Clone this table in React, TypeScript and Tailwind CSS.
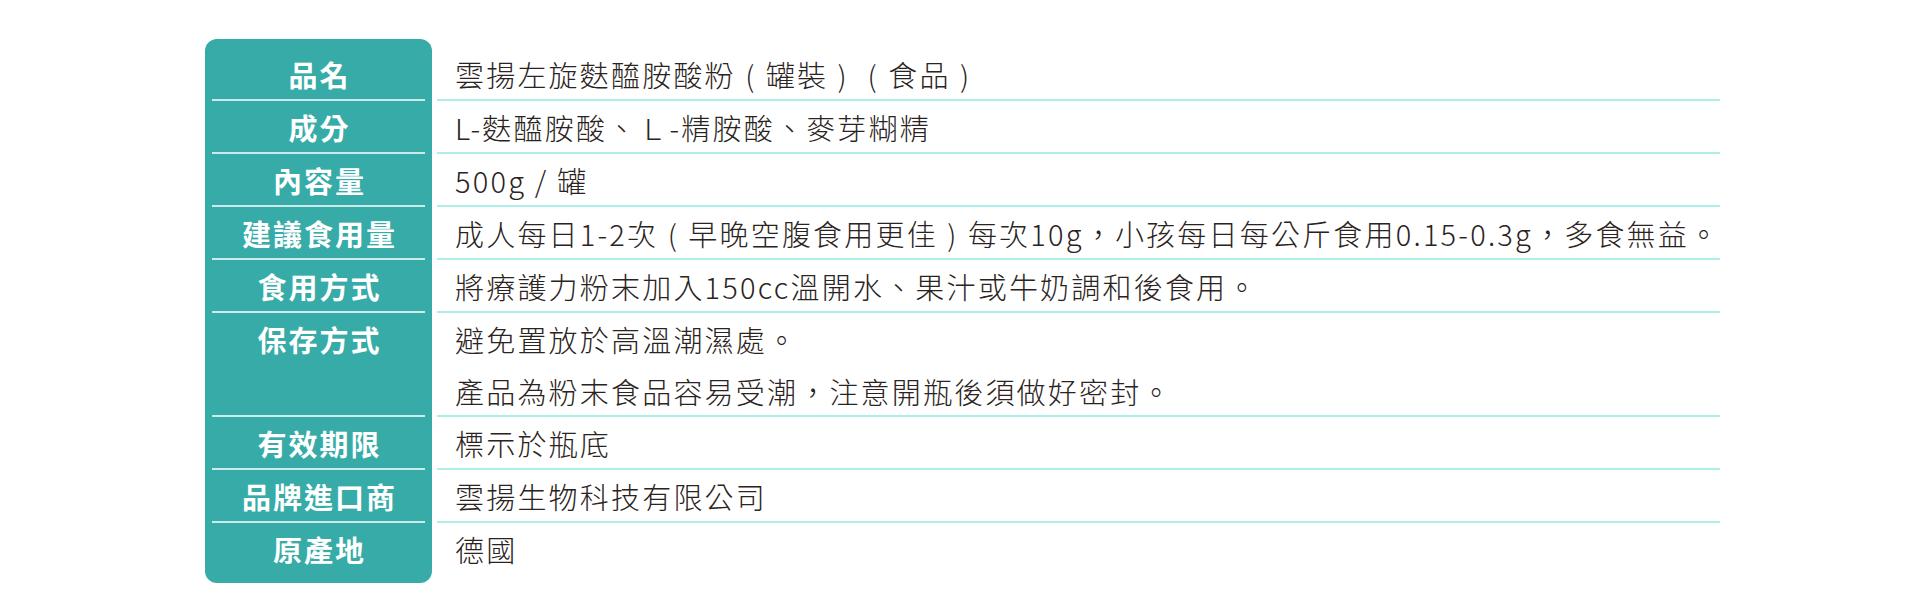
import { Fragment } from "react";

const rows: { label: string; lines: string[] }[] = [
  { label: "品名", lines: ["雲揚左旋麩醯胺酸粉（罐裝）（食品）"] },
  { label: "成分", lines: ["L-麩醯胺酸、Ｌ-精胺酸、麥芽糊精"] },
  { label: "內容量", lines: ["500g / 罐"] },
  {
    label: "建議食用量",
    lines: ["成人每日1-2次（早晚空腹食用更佳）每次10g，小孩每日每公斤食用0.15-0.3g，多食無益。"],
  },
  { label: "食用方式", lines: ["將療護力粉末加入150cc溫開水、果汁或牛奶調和後食用。"] },
  {
    label: "保存方式",
    lines: ["避免置放於高溫潮濕處。", "產品為粉末食品容易受潮，注意開瓶後須做好密封。"],
  },
  { label: "有效期限", lines: ["標示於瓶底"] },
  { label: "品牌進口商", lines: ["雲揚生物科技有限公司"] },
  { label: "原產地", lines: ["德國"] },
];

const font = { fontFamily: '"Noto Sans CJK TC", "Noto Sans", sans-serif' };

// full-width brackets sit centred in their cell in the original
function Line({ text }: { text: string }) {
  const parts = text.split(/([（）])/);
  return (
    <>
      {parts.map((p, i) =>
        p === "（" || p === "）" ? (
          <span key={i} className="inline-block w-[30px] text-center">
            {p === "（" ? "(" : ")"}
          </span>
        ) : (
          <Fragment key={i}>{p}</Fragment>
        )
      )}
    </>
  );
}

export default function App() {
  return (
    <div className="w-[1920px] h-[613px] bg-white overflow-hidden" style={font}>
      <div className="flex pt-[39px] pl-[205px] gap-[5px]">
        {/* Label column */}
        <div className="w-[227px] bg-[#36aba8] rounded-[12px] px-[7px] pt-[9px] pb-[7px]">
          {rows.map((row, i) => (
            <div
              key={row.label}
              className={`flex items-start justify-center ${
                row.lines.length > 1 ? "h-[104px]" : "h-[53px]"
              } ${i < rows.length - 1 ? "border-b-2 border-white/75" : ""}`}
            >
              <span className="h-[52px] leading-[52px] text-[29px] font-bold tracking-[2px] pl-[2px] text-white">
                {row.label}
              </span>
            </div>
          ))}
        </div>

        {/* Value column */}
        <div className="w-[1283px] pt-[9px]">
          {rows.map((row, i) => (
            <div
              key={row.label}
              className={`pl-[18px] ${row.lines.length > 1 ? "h-[104px]" : "h-[53px]"} ${
                i < rows.length - 1 ? "border-b-2 border-[#aeeee9]" : ""
              }`}
            >
              {row.lines.map((line) => (
                <div
                  key={line}
                  className="h-[52px] leading-[52px] text-[29px] font-light tracking-[2.2px] text-[#2a2321] whitespace-nowrap"
                >
                  <Line text={line} />
                </div>
              ))}
            </div>
          ))}
        </div>
      </div>
    </div>
  );
}
